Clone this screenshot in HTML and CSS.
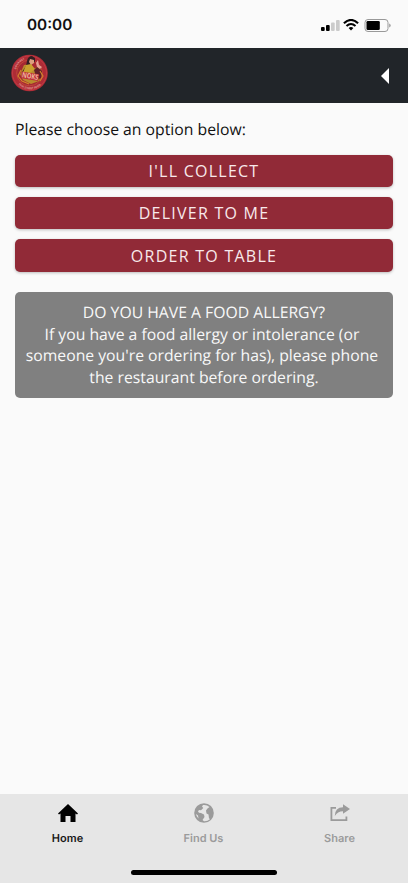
FILE: index.html
```html
<!DOCTYPE html>
<html lang="en">
<head>
<meta charset="utf-8">
<meta name="viewport" content="width=device-width, initial-scale=1">
<title>Order</title>
<link rel="stylesheet" href="styles.css">
</head>
<body>
<div class="status">
  <time class="clock">00:00</time>
  <div class="indicators">
    <svg class="signal" width="19" height="11" viewBox="0 0 19 11"><rect x="0" y="7" width="3.7" height="4" rx="1"/><rect x="5" y="5" width="3.7" height="6" rx="1"/><g fill="#cbcbcb"><rect x="10" y="2.4" width="3.7" height="8.6" rx="1"/><rect x="15" y="0" width="3.7" height="11" rx="1"/></g></svg>
    <svg class="wifi" width="16" height="12" viewBox="0 0 16 12"><g fill="none" stroke="#000" stroke-width="2.1"><path d="M.9 4.3Q8-2.4 15.1 4.3"/><path d="M3.5 7.1Q8 2.9 12.5 7.1"/></g><path d="M5.6 9Q8 7 10.4 9L8 11.5Z"/></svg>
    <svg class="battery" width="27" height="13" viewBox="0 0 27 13"><rect x="1" y=".5" width="23" height="12" rx="3" fill="none" stroke="#999"/><rect x="2.500" y="2" width="13.300" height="9" rx="1.300"/><path d="M25.300 4.500q1.300.5 1.300 2t-1.300 2z" fill="#888"/></svg>
  </div>
</div>
<header class="header">
  <svg class="logo" width="38" height="38" viewBox="0 0 38 38">
    <defs><path id="top" d="M4.500 19A14.500 14.500 0 0 1 33.500 19"/><path id="bottom" d="M3 22A16.300 16.300 0 0 0 35 22"/></defs>
    <circle cx="18.500" cy="19" r="18.300" fill="#ad2b35"/>
    <circle cx="18.500" cy="19" r="17" fill="none" stroke="#cc454d" stroke-width=".6"/>
    <circle cx="18.500" cy="19" r="12.800" fill="#a52832" stroke="#c8543f" stroke-width=".7"/>
    <path d="M9 20L13 11l7-1 3 5 5-3 3 8-3 7-8 3-8-4z" fill="#b98a2d"/>
    <path d="M16 7q1-5 5-5l3 2v4l-3-1-2 5-5 5-3 1 4-6z" fill="#321e22"/>
    <path d="M19 5l4 1v3l-3 2-2-3z" fill="#dda080"/>
    <path d="M15 11l5-1 4 5-5 4-8 2z" fill="#c9a12d"/>
    <path d="M25 9l2-3 1 5 3 2-2 2-3-2z" fill="#e5a092"/>
    <path d="M23 16l3-3 5 4-1 7-4 2z" fill="#602028"/>
    <path d="M10 16l-3 6 4 5 7 3m11-13l3 5-3 5" fill="none" stroke="#d4872c" stroke-width="1.100"/>
    <path d="M10.500 17.500l17.500 2.800-1 6.700-16.500-2.800z" fill="#bd303b"/>
    <text class="brand" x="11" y="24.600" transform="rotate(9 19 22)" textLength="16.500" lengthAdjust="spacingAndGlyphs">NOKS</text>
    <text class="ring"><textPath href="#top" startOffset="8%">GOURMET</textPath></text>
    <text class="ring"><textPath href="#bottom" startOffset="21%">THAI STREET FOOD</textPath></text>
  </svg>
  <svg class="back" width="8" height="16" viewBox="0 0 8 16"><path d="M8 0v16L0 8z" fill="#fff"/></svg>
</header>
<main class="content">
  <p class="prompt">Please choose an option below:</p>
  <div class="options">
    <button class="option">I'LL COLLECT</button>
    <button class="option">DELIVER TO ME</button>
    <button class="option">ORDER TO TABLE</button>
  </div>
  <section class="allergy">DO YOU HAVE A FOOD ALLERGY?<br>If you have a food allergy or intolerance (or&nbsp;<br>someone you're ordering for has), please phone&nbsp;<br>the restaurant before ordering.</section>
</main>
<nav class="tabs">
  <a class="tab active"><svg width="20" height="20" viewBox="0 0 20 20"><path d="M10 1L0 10.500l1 1 1.500-1V19h5v-6h5v6h5v-8.500l1.500 1 1-1z"/></svg><span>Home</span></a>
  <a class="tab"><svg width="20" height="20" viewBox="0 0 20 20"><circle cx="10" cy="10" r="9.800"/><path class="ocean" d="M9 2Q13 1.500 15.500 4L13.500 5.500 12 7.500 12.500 10.500l2 1 .5 4 1.200.5Q13.500 18.500 10 18.200L8.500 17l2-3-.5-2.500-3-1.500-2-.2L4 8.500l1-1.500 2 .3L9.300 5 8 3.500zM2 11l2 1.500.5 3Q2.300 13.700 2 11z"/></svg><span>Find Us</span></a>
  <a class="tab"><svg width="20" height="20" viewBox="0 0 20 20"><path d="M6 4.800H1.400v12.300h15v-3.500" fill="none" stroke="currentColor" stroke-width="1.800"/><path d="M4.800 13Q5 4.300 13 4.300V1.300l7 4.700-7 4.700V8.300Q7.500 8.300 4.800 13z"/></svg><span>Share</span></a>
</nav>
<footer class="home-area"><div class="home-indicator"></div></footer>
</body>
</html>
```
FILE: styles.css
```css
* { box-sizing: border-box; }
body {
  margin: 0;
  height: 883px;
  display: flex;
  flex-direction: column;
  overflow: hidden;
  background: #fafafa;
  color: #111;
  font-family: "Open Sans", sans-serif;
  text-rendering: geometricPrecision;
}
svg { display: block; }
.status {
  height: 48px;
  display: flex;
  justify-content: space-between;
  padding: 15px 17px 0 27px;
}
.clock { font: 600 15.3px/20px Inter, sans-serif; }
.indicators { display: flex; height: 20px; align-items: center; gap: 4px; }
.signal { margin: 1px -1px 0 0; }
.wifi { margin-right: 1px; }
.header {
  height: 55px;
  display: flex;
  justify-content: space-between;
  align-items: center;
  padding: 0 19px 5px 11px;
  background: #212529;
}
.back { margin-top: 5px; }
.brand { font: 700 7.3px "Open Sans", sans-serif; fill: #efb69a; }
.ring { font: 700 2.7px "Open Sans", sans-serif; fill: #e5a09a; }
.content { flex: 1; padding: 15px 15px 0; }
.prompt { margin: 0 0 14px; font-size: 15.75px; line-height: 22px; }
.options { display: grid; gap: 10px; padding-top: .5px; }
.option {
  height: 32.4px;
  border: 0;
  border-radius: 5px;
  padding: .5px 0 0;
  background: #912a37;
  color: #f8e9eb;
  box-shadow: 0 1px 3px rgb(0 0 0 / 25%);
  font: 16px/32px "Open Sans", sans-serif;
  letter-spacing: 1.25px;
}
.allergy {
  margin-top: 20px;
  height: 106px;
  padding: 10.3px 0;
  border-radius: 5px;
  background: #808080;
  color: #f8f8f8;
  font-size: 15.75px;
  line-height: 21.7px;
  text-align: center;
}
.tabs {
  height: 68px;
  display: grid;
  grid-template-columns: repeat(3, 1fr);
  background: #e6e6e6;
}
.tab {
  display: flex;
  flex-direction: column;
  align-items: center;
  padding-top: 9px;
  color: #9b9b9b;
  font: 600 11px/14px Inter, sans-serif;
}
.tab svg { fill: currentColor; }
.tab .ocean { fill: #e6e6e6; }
.tab span { margin: 8px 1px 0 0; }
.active { color: #000; }
.active span { color: #181818; }
.home-area { height: 21px; padding-top: 8px; background: #e6e6e6; }
.home-indicator { width: 146px; height: 5px; margin: 0 auto; border-radius: 3px; background: #000; }
```
